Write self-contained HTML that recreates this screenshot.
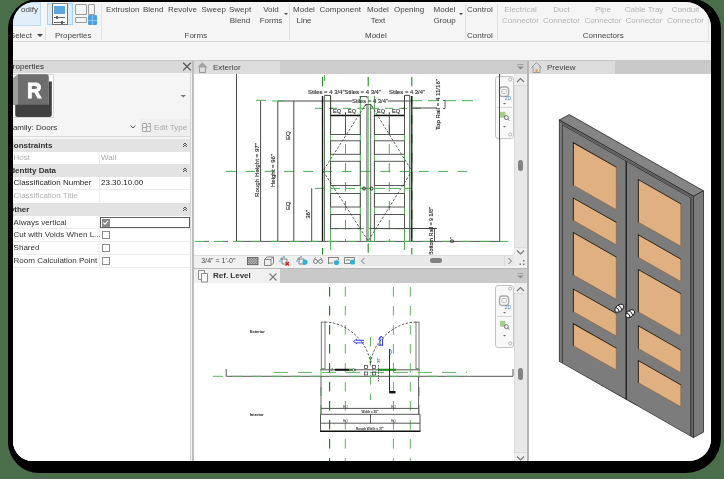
<!DOCTYPE html>
<html><head><meta charset="utf-8">
<style>
*{box-sizing:border-box}
html,body{margin:0;padding:0}
body{width:724px;height:479px;background:#4a6e4a;position:relative;overflow:hidden;font-family:"Liberation Sans",sans-serif;color:#333}
#shadow{position:absolute;left:8px;top:-1px;width:713px;height:473.5px;background:#000;border-radius:30px 30px 35px 31px}
#app{position:absolute;left:13px;top:2px;width:698px;height:458.5px;border-radius:22px 26px 22px 20px;overflow:hidden;background:#f5f5f5}
#in{position:absolute;left:-13px;top:-2px;width:724px;height:479px;will-change:transform}
.a{position:absolute}
svg{display:block}
.t{position:absolute;white-space:nowrap;font-size:8px;line-height:10px;color:#2e2e2e}
.c{text-align:center}
.g{color:#b4b4b4}
</style></head><body>
<div id="shadow"></div>
<div id="app"><div id="in">
<!-- ribbon -->
<div class="a" style="left:0;top:0;width:724px;height:60px;background:#f5f5f5"></div>
<div class="a" style="left:0;top:41px;width:724px;height:1px;background:#d9d9d9"></div>

<!-- modify -->
<div class="a" style="left:-6px;top:2px;width:47px;height:24px;background:#dfeef9;border:1px solid #bcdcf3"></div>
<div class="t" style="left:21px;top:4.6px;color:#454545">odify</div>
<div class="t" style="left:9.8px;top:30.8px;color:#454545">Select</div>
<div class="a" style="left:37px;top:34px;width:0;height:0;border-left:3px solid transparent;border-right:3px solid transparent;border-top:3px solid #444"></div>
<div class="a" style="left:45px;top:27px;width:1px;height:13px;background:#e0e0e0"></div>
<!-- properties icons -->
<div class="a" style="left:47px;top:3px;width:26px;height:22px;background:#dcedfa;border:1px solid #a3d1f3"></div>
<div class="a" style="left:51.5px;top:3px;width:16.5px;height:22px;background:#fafafa;border:1px solid #707070;border-top-color:#888"></div>
<div class="a" style="left:54px;top:5.5px;width:11px;height:8px;background:#5ba6e1"></div>
<div class="a" style="left:54px;top:17px;width:11px;height:1px;background:#666"></div>
<div class="a" style="left:56px;top:16px;width:2px;height:3px;background:#666"></div>
<div class="a" style="left:54px;top:22px;width:11px;height:1px;background:#666"></div>
<div class="a" style="left:61px;top:21px;width:2px;height:3px;background:#666"></div>
<div class="a" style="left:75px;top:3.5px;width:12px;height:11px;border:1px solid #9a9a9a;border-radius:1px"></div>
<div class="a" style="left:88px;top:3.5px;width:7px;height:11px;border:1px solid #9a9a9a;border-radius:1px"></div>
<div class="a" style="left:75px;top:16.5px;width:12px;height:6px;border:1px solid #9a9a9a;border-radius:1px"></div>
<div class="a" style="left:87.5px;top:15px;width:9px;height:9.5px;background:#4f9fe0;border-radius:1px"></div>
<div class="a" style="left:91.5px;top:15px;width:1px;height:9.5px;background:#8cc2ee"></div>
<div class="a" style="left:87.5px;top:19.5px;width:9px;height:1px;background:#8cc2ee"></div>
<div class="t" style="left:55px;top:30.8px;color:#454545">Properties</div>
<div class="a" style="left:101px;top:4px;width:1px;height:36px;background:#e2e2e2"></div>
<!-- forms -->
<div class="t" style="left:106px;top:4.6px;color:#454545">Extrusion</div>
<div class="t" style="left:143px;top:4.6px;color:#454545">Blend</div>
<div class="t" style="left:168px;top:4.6px;color:#454545">Revolve</div>
<div class="t" style="left:201.5px;top:4.6px;color:#454545">Sweep</div>
<div class="t c" style="left:226px;top:4.0px;width:28px;line-height:11.2px;color:#454545">Swept<br>Blend</div>
<div class="t c" style="left:257px;top:4.0px;width:28px;line-height:11.2px;color:#454545">Void<br>Forms</div>
<div class="a" style="left:283.5px;top:12.5px;width:0;height:0;border-left:2px solid transparent;border-right:2px solid transparent;border-top:2px solid #444"></div>
<div class="t" style="left:184.5px;top:30.8px;color:#454545">Forms</div>
<div class="a" style="left:288.5px;top:4px;width:1px;height:36px;background:#e2e2e2"></div>
<!-- model -->
<div class="t c" style="left:290px;top:4.0px;width:28px;line-height:11.2px;color:#454545">Model<br>Line</div>
<div class="t" style="left:319.5px;top:4.6px;color:#454545">Component</div>
<div class="t c" style="left:364px;top:4.0px;width:28px;line-height:11.2px;color:#454545">Model<br>Text</div>
<div class="t" style="left:394px;top:4.6px;color:#454545">Opening</div>
<div class="t c" style="left:430.5px;top:4.0px;width:28px;line-height:11.2px;color:#454545">Model<br>Group</div>
<div class="a" style="left:458.5px;top:12.5px;width:0;height:0;border-left:2px solid transparent;border-right:2px solid transparent;border-top:2px solid #444"></div>
<div class="t" style="left:365px;top:30.8px;color:#454545">Model</div>
<div class="a" style="left:464.5px;top:4px;width:1px;height:36px;background:#e2e2e2"></div>
<!-- control -->
<div class="t" style="left:467px;top:4.6px;color:#454545">Control</div>
<div class="t" style="left:467px;top:30.8px;color:#454545">Control</div>
<div class="a" style="left:497px;top:4px;width:1px;height:36px;background:#e2e2e2"></div>
<!-- connectors -->
<div class="t c g" style="left:500px;top:4.0px;width:41px;line-height:11.2px">Electrical<br>Connector</div>
<div class="t c g" style="left:541px;top:4.0px;width:41px;line-height:11.2px">Duct<br>Connector</div>
<div class="t c g" style="left:582.5px;top:4.0px;width:41px;line-height:11.2px">Pipe<br>Connector</div>
<div class="t c g" style="left:623.5px;top:4.0px;width:41px;line-height:11.2px">Cable Tray<br>Connector</div>
<div class="t c g" style="left:665px;top:4.0px;width:41px;line-height:11.2px">Conduit<br>Connector</div>
<div class="t" style="left:582.8px;top:30.8px;color:#454545">Connectors</div>
<div class="a" style="left:707.5px;top:4px;width:1px;height:36px;background:#e2e2e2"></div>

<!-- panel headers -->
<div class="a" style="left:0;top:60px;width:724px;height:1px;background:#c6c6c6"></div>
<div class="a" style="left:0;top:61px;width:192px;height:11.5px;background:#d9d9d9"></div>
<div class="t" style="left:7.5px;top:62.2px">Properties</div>

<!-- properties panel body -->
<div class="a" style="left:0;top:72.5px;width:191px;height:390px;background:#f5f5f5"></div>
<div class="a" style="left:190px;top:73px;width:1px;height:390px;background:#d4d4d4"></div>
<div class="a" style="left:192.2px;top:61px;width:2px;height:400px;background:#bcbcbc"></div>
<svg class="a" style="left:182px;top:62px" width="10" height="10"><path d="M1.2 0.8L8.8 8.4M8.8 0.8L1.2 8.4" stroke="#555" stroke-width="1.3"/></svg>
<!-- type selector -->
<div class="a" style="left:6px;top:74px;width:48px;height:44px;background:#fff;border:1px solid #d6d6d6"></div>
<svg class="a" style="left:0;top:0" width="200" height="140">
<path d="M13 78 L18 74.3 L18 105 L13 105Z" fill="#9c9c9c"/>
<path d="M18 74.3 H46.5 Q48.8 74.3 48.8 76.6 V105 H18Z" fill="#6e6e6e"/>
<path d="M48.8 81.5 H51.8 V105 H48.8Z" fill="#3d3d3d"/>
<path d="M15.2 104.8 H51.8 V114.5 Q51.8 117 49.3 117 H17.7 Q15.2 117 15.2 114.5 V104.8Z" fill="#404040"/>
<text x="0" y="0" transform="translate(34.2 97.8) scale(0.9 1)" font-family="Liberation Sans" font-weight="700" font-size="22.5" fill="#fff" stroke="#fff" stroke-width="0.9" text-anchor="middle">R</text>
<path d="M180.5 95 L186 95 L183.25 97.5Z" fill="#777"/>
<path d="M130.5 125.5 L133 128 L135.5 125.5" fill="none" stroke="#555" stroke-width="1"/>
</svg>
<div class="t" style="left:8px;top:122.8px">Family: Doors</div>
<div class="a" style="left:140px;top:119px;width:50px;height:17px;background:#efefef"></div>
<svg class="a" style="left:142px;top:123px" width="9" height="9"><path d="M0.5 0.5H4.5V8.5H0.5ZM4.5 3.5H8.5V8.5H4.5ZM0.5 4.5H4.5M6 0.5H8.5V3.5" fill="none" stroke="#aaa" stroke-width="1"/></svg>
<div class="t g" style="left:154px;top:122.5px;color:#a9a9a9">Edit Type</div>
<div class="a" style="left:0;top:136px;width:190px;height:1px;background:#dcdcdc"></div>
<!-- property grid -->
<div class="a" style="left:0;top:138.5px;width:190px;height:330px;background:#fff"></div>
<div class="a" style="left:0;top:139px;width:190px;height:12.5px;background:#e3e3e3"></div>
<div class="t" style="left:8px;top:140.5px;font-weight:bold;color:#333">Constraints</div>
<svg class="a" style="left:182px;top:142px" width="6" height="6"><path d="M1 3L3 1L5 3M1 5L3 3L5 5" fill="none" stroke="#444" stroke-width="0.9"/></svg>
<div class="a" style="left:0;top:163.5px;width:190px;height:1px;background:#ececec"></div>
<div class="a" style="left:99px;top:151.5px;width:1px;height:12.5px;background:#ececec"></div>
<div class="t" style="left:13.6px;top:153.1px;color:#b0b0b0">Host</div>
<div class="t" style="left:101px;top:153.1px;color:#a8a8a8">Wall</div>
<div class="a" style="left:0;top:164px;width:190px;height:12.5px;background:#e3e3e3"></div>
<div class="t" style="left:8px;top:165.5px;font-weight:bold;color:#333">Identity Data</div>
<svg class="a" style="left:182px;top:167px" width="6" height="6"><path d="M1 3L3 1L5 3M1 5L3 3L5 5" fill="none" stroke="#444" stroke-width="0.9"/></svg>
<div class="a" style="left:0;top:189.0px;width:190px;height:1px;background:#ececec"></div>
<div class="a" style="left:99px;top:176.5px;width:1px;height:13.0px;background:#ececec"></div>
<div class="t" style="left:13.6px;top:178.1px;color:#1e1e1e">Classification Number</div>
<div class="t" style="left:101px;top:178.1px;color:#222">23.30.10.00</div>
<div class="a" style="left:0;top:202.5px;width:190px;height:1px;background:#ececec"></div>
<div class="a" style="left:99px;top:189.5px;width:1px;height:13.5px;background:#ececec"></div>
<div class="t" style="left:13.6px;top:191.1px;color:#b0b0b0">Classification Title</div>
<div class="a" style="left:0;top:203px;width:190px;height:13px;background:#e3e3e3"></div>
<div class="t" style="left:8px;top:204.5px;font-weight:bold;color:#333">Other</div>
<svg class="a" style="left:182px;top:206px" width="6" height="6"><path d="M1 3L3 1L5 3M1 5L3 3L5 5" fill="none" stroke="#444" stroke-width="0.9"/></svg>
<div class="a" style="left:0;top:228.0px;width:190px;height:1px;background:#ececec"></div>
<div class="a" style="left:99px;top:216px;width:1px;height:12.5px;background:#ececec"></div>
<div class="t" style="left:13.6px;top:217.6px;color:#333">Always vertical</div>
<div class="a" style="left:99.5px;top:216.7px;width:90.5px;height:11.5px;border:1px solid #5e5e5e"></div>
<div class="a" style="left:101.5px;top:218.5px;width:8px;height:8px;background:#fff;border:1px solid #8a8a8a"></div>
<svg class="a" style="left:102px;top:219px" width="7" height="7"><path d="M0 0H7V7H0Z" fill="#888"/><path d="M1.3 3.5L3 5.2L6 1.8" fill="none" stroke="#fff" stroke-width="1.1"/></svg>
<div class="a" style="left:0;top:240.5px;width:190px;height:1px;background:#ececec"></div>
<div class="a" style="left:99px;top:228.5px;width:1px;height:12.5px;background:#ececec"></div>
<div class="t" style="left:13.6px;top:230.1px;color:#333">Cut with Voids When L...</div>
<div class="a" style="left:101.5px;top:231.0px;width:8px;height:8px;background:#fff;border:1px solid #8a8a8a"></div>
<div class="a" style="left:0;top:253.5px;width:190px;height:1px;background:#ececec"></div>
<div class="a" style="left:99px;top:241px;width:1px;height:13px;background:#ececec"></div>
<div class="t" style="left:13.6px;top:242.6px;color:#333">Shared</div>
<div class="a" style="left:101.5px;top:243.5px;width:8px;height:8px;background:#fff;border:1px solid #8a8a8a"></div>
<div class="a" style="left:0;top:266.5px;width:190px;height:1px;background:#ececec"></div>
<div class="a" style="left:99px;top:254px;width:1px;height:13px;background:#ececec"></div>
<div class="t" style="left:13.6px;top:255.6px;color:#333">Room Calculation Point</div>
<div class="a" style="left:101.5px;top:256.5px;width:8px;height:8px;background:#fff;border:1px solid #8a8a8a"></div>

<!-- view headers -->
<div class="a" style="left:194px;top:61px;width:334px;height:13px;background:#cdcdcd"></div>
<div class="a" style="left:194px;top:61px;width:86px;height:13px;background:#dcdcdc"></div>
<svg class="a" style="left:196px;top:61px" width="14" height="13"><path d="M1.3 6.5L6.3 1.2L11.7 6.5Z" fill="#a3a3a3"/><path d="M3.5 6.5V11.5H9.5V6.5" fill="none" stroke="#9a9a9a" stroke-width="1"/></svg>
<div class="t" style="left:213px;top:63px;color:#404040">Exterior</div>
<svg class="a" style="left:516px;top:63px" width="9" height="9"><path d="M1.5 1.5H7.5" stroke="#9a9a9a" stroke-width="0.9"/><path d="M1.3 3.5H7.7L4.5 6.6Z" fill="#8c8c8c"/></svg>
<div class="a" style="left:527px;top:61px;width:1.5px;height:400px;background:#b4b4b4"></div>
<div class="a" style="left:528.5px;top:61px;width:190px;height:13px;background:#c9c9c9"></div>
<div class="a" style="left:528.5px;top:61px;width:86.5px;height:13px;background:#dcdcdc"></div>
<svg class="a" style="left:530px;top:61px" width="14" height="13"><path d="M1.5 6.5L6.5 1.5L11.5 6.5M3 5V11.5H10V5" fill="none" stroke="#9a9a9a" stroke-width="1"/><path d="M5.5 8V11.5H7.5V8Z" fill="#e0a060"/></svg>
<div class="t" style="left:547px;top:63px;color:#404040">Preview</div>
<!-- exterior view body -->
<div class="a" style="left:194px;top:74px;width:333px;height:181px;background:#fff"></div>
<!--EXT--><svg class="a" style="left:0;top:0" width="724" height="479" font-family="Liberation Sans"><defs><clipPath id="cx"><rect x="194" y="74" width="320" height="180.5"/></clipPath></defs><g clip-path="url(#cx)"><line x1="203.5" y1="241.4" x2="236.5" y2="241.4" stroke="#666" stroke-width="1" stroke-dasharray="5.5 13.5"/>
<line x1="236.5" y1="241.4" x2="500" y2="241.4" stroke="#555" stroke-width="1"/>
<line x1="226" y1="171.4" x2="470" y2="171.4" stroke="#4caf50" stroke-width="1" stroke-dasharray="9.8 9.5"/>
<line x1="194.8" y1="241.4" x2="512" y2="241.4" stroke="#4caf50" stroke-width="1" stroke-dasharray="9.5 9.5"/>
<line x1="411" y1="100.7" x2="478" y2="100.7" stroke="#4caf50" stroke-width="1" stroke-dasharray="11 6"/>
<line x1="315" y1="108.3" x2="421" y2="108.3" stroke="#4caf50" stroke-width="1" stroke-dasharray="8 6"/>
<line x1="315" y1="188.4" x2="412" y2="188.4" stroke="#4caf50" stroke-width="1" stroke-dasharray="10 5"/>
<line x1="330" y1="228.6" x2="412" y2="228.6" stroke="#4caf50" stroke-width="1" stroke-dasharray="8 5"/>
<line x1="322.5" y1="77" x2="322.5" y2="255" stroke="#1e8c1e" stroke-width="1.1" stroke-dasharray="9.2 9.8"/>
<line x1="411.8" y1="77" x2="411.8" y2="255" stroke="#1e8c1e" stroke-width="1.1" stroke-dasharray="9.2 9.8"/>
<line x1="368.2" y1="77" x2="368.2" y2="96" stroke="#1e8c1e" stroke-width="1.1" stroke-dasharray="9.2 9.8"/>
<line x1="368.2" y1="96" x2="368.2" y2="241" stroke="#4caf50" stroke-width="0.9"/>
<line x1="368.2" y1="241" x2="368.2" y2="255" stroke="#1e8c1e" stroke-width="1.1" stroke-dasharray="0 2.6 9.2 9.8"/>
<line x1="324.4" y1="75" x2="324.4" y2="81" stroke="#4caf50" stroke-width="1"/>
<line x1="324.4" y1="96" x2="324.4" y2="241" stroke="#4caf50" stroke-width="1"/>
<line x1="330.6" y1="96" x2="330.6" y2="241" stroke="#4caf50" stroke-width="1"/>
<line x1="360.3" y1="96" x2="360.3" y2="241" stroke="#4caf50" stroke-width="1"/>
<line x1="374.4" y1="96" x2="374.4" y2="241" stroke="#4caf50" stroke-width="1"/>
<line x1="404.5" y1="96" x2="404.5" y2="241" stroke="#4caf50" stroke-width="1"/>
<line x1="409.8" y1="96" x2="409.8" y2="241" stroke="#4caf50" stroke-width="1"/>
<line x1="330.6" y1="241" x2="330.6" y2="255" stroke="#4caf50" stroke-width="1" stroke-dasharray="9 10"/>
<line x1="404.5" y1="241" x2="404.5" y2="255" stroke="#4caf50" stroke-width="1" stroke-dasharray="9 10"/>
<line x1="345.5" y1="125" x2="345.5" y2="241" stroke="#4caf50" stroke-width="1" stroke-dasharray="9.5 9.5"/>
<line x1="389.3" y1="125" x2="389.3" y2="241" stroke="#4caf50" stroke-width="1" stroke-dasharray="9.5 9.5"/>
<line x1="236.5" y1="74" x2="236.5" y2="241" stroke="#4a4a4a" stroke-width="1"/>
<line x1="260.6" y1="100" x2="260.6" y2="241" stroke="#4a4a4a" stroke-width="1"/>
<line x1="277.8" y1="101" x2="277.8" y2="241" stroke="#4a4a4a" stroke-width="1"/>
<line x1="293.8" y1="101" x2="293.8" y2="241" stroke="#4a4a4a" stroke-width="1"/>
<line x1="311.7" y1="188.3" x2="311.7" y2="241" stroke="#4a4a4a" stroke-width="1"/>
<line x1="499.7" y1="74" x2="499.7" y2="241.5" stroke="#4a4a4a" stroke-width="1"/>
<line x1="277.8" y1="101" x2="352" y2="101" stroke="#4a4a4a" stroke-width="1"/>
<line x1="388" y1="101" x2="412" y2="101" stroke="#4a4a4a" stroke-width="1"/>
<line x1="412" y1="108" x2="437" y2="108" stroke="#4a4a4a" stroke-width="1"/>
<line x1="436" y1="228.5" x2="370" y2="228.5" stroke="#4a4a4a" stroke-width="1"/>
<line x1="256" y1="100.3" x2="266" y2="100.3" stroke="#4caf50" stroke-width="1"/>
<line x1="272" y1="101" x2="284" y2="101" stroke="#4caf50" stroke-width="1"/>
<line x1="322.5" y1="96" x2="322.5" y2="241" stroke="#1a1a1a" stroke-width="1.3"/>
<line x1="324.4" y1="95.4" x2="324.4" y2="241" stroke="#666" stroke-width="0.8"/>
<line x1="411.8" y1="96" x2="411.8" y2="241" stroke="#1a1a1a" stroke-width="1.3"/>
<line x1="409.8" y1="95.4" x2="409.8" y2="241" stroke="#666" stroke-width="0.8"/>
<line x1="366.9" y1="104" x2="366.9" y2="241" stroke="#555" stroke-width="0.9"/>
<line x1="370.7" y1="104" x2="370.7" y2="241" stroke="#555" stroke-width="0.9"/>
<line x1="330.6" y1="95.4" x2="330.6" y2="115.4" stroke="#333" stroke-width="0.9"/>
<line x1="404.5" y1="95.4" x2="404.5" y2="115.4" stroke="#333" stroke-width="0.9"/>
<line x1="324.4" y1="95.4" x2="330.6" y2="95.4" stroke="#333" stroke-width="0.9"/>
<line x1="404.5" y1="95.4" x2="409.8" y2="95.4" stroke="#333" stroke-width="0.9"/>
<line x1="360.3" y1="96.5" x2="367" y2="96.5" stroke="#333" stroke-width="0.8"/>
<line x1="360.3" y1="96.5" x2="360.3" y2="98.5" stroke="#333" stroke-width="0.8"/>
<line x1="367" y1="96.5" x2="367" y2="98.5" stroke="#333" stroke-width="0.8"/>
<rect x="330.6" y="115.4" width="29.69999999999999" height="19.099999999999994" fill="none" stroke="#505050" stroke-width="0.95"/>
<rect x="330.6" y="140.8" width="29.69999999999999" height="13.5" fill="none" stroke="#505050" stroke-width="0.95"/>
<rect x="330.6" y="161.3" width="29.69999999999999" height="24.19999999999999" fill="none" stroke="#505050" stroke-width="0.95"/>
<rect x="330.6" y="193.5" width="29.69999999999999" height="13.5" fill="none" stroke="#505050" stroke-width="0.95"/>
<rect x="330.6" y="214.5" width="29.69999999999999" height="14.099999999999994" fill="none" stroke="#505050" stroke-width="0.95"/>
<line x1="330.6" y1="115.4" x2="360.3" y2="115.4" stroke="#111" stroke-width="1.5"/>
<rect x="374.4" y="115.4" width="30.100000000000023" height="19.099999999999994" fill="none" stroke="#505050" stroke-width="0.95"/>
<rect x="374.4" y="140.8" width="30.100000000000023" height="13.5" fill="none" stroke="#505050" stroke-width="0.95"/>
<rect x="374.4" y="161.3" width="30.100000000000023" height="24.19999999999999" fill="none" stroke="#505050" stroke-width="0.95"/>
<rect x="374.4" y="193.5" width="30.100000000000023" height="13.5" fill="none" stroke="#505050" stroke-width="0.95"/>
<rect x="374.4" y="214.5" width="30.100000000000023" height="14.099999999999994" fill="none" stroke="#505050" stroke-width="0.95"/>
<line x1="374.4" y1="115.4" x2="404.5" y2="115.4" stroke="#111" stroke-width="1.5"/>
<line x1="345.5" y1="112" x2="345.5" y2="134.5" stroke="#444" stroke-width="0.9"/>
<line x1="389.3" y1="112" x2="389.3" y2="134.5" stroke="#444" stroke-width="0.9"/>
<line x1="330.6" y1="108.3" x2="333" y2="108.3" stroke="#333" stroke-width="0.8"/>
<line x1="404.5" y1="108.3" x2="402" y2="108.3" stroke="#333" stroke-width="0.8"/>
<path d="M366 104 L323 171 L368.2 241 L411.8 171 L370.5 104" fill="none" stroke="#333" stroke-width="0.75" stroke-dasharray="2.6 1.6"/>
<path d="M363.5 107.5 L366 104.5 H370.5 L373 107.5" fill="none" stroke="#333" stroke-width="0.7"/>
<circle cx="364" cy="188.5" r="1.5" fill="none" stroke="#222" stroke-width="1"/>
<circle cx="371.5" cy="188.5" r="1.5" fill="none" stroke="#222" stroke-width="1"/>
<path d="M443 100.5 H445 V108.5 H443 M434.5 228.5 V241 M434.5 228.5 H437" fill="none" stroke="#333" stroke-width="0.8"/>
<text x="258.6" y="170" font-size="6.2" fill="#262626" stroke="#262626" stroke-width="0.12" text-anchor="middle" transform="rotate(-90 258.6 170)" textLength="54" lengthAdjust="spacingAndGlyphs">Rough Height = 97"</text>
<text x="275" y="170.5" font-size="6.2" fill="#262626" stroke="#262626" stroke-width="0.12" text-anchor="middle" transform="rotate(-90 275 170.5)" textLength="33" lengthAdjust="spacingAndGlyphs">Height = 96"</text>
<text x="290.5" y="135.6" font-size="6" fill="#262626" stroke="#262626" stroke-width="0.12" text-anchor="middle" transform="rotate(-90 290.5 135.6)" textLength="9" lengthAdjust="spacingAndGlyphs">EQ</text>
<text x="290.5" y="205.8" font-size="6" fill="#262626" stroke="#262626" stroke-width="0.12" text-anchor="middle" transform="rotate(-90 290.5 205.8)" textLength="8.5" lengthAdjust="spacingAndGlyphs">EQ</text>
<text x="310" y="214.3" font-size="6" fill="#262626" stroke="#262626" stroke-width="0.12" text-anchor="middle" transform="rotate(-90 310 214.3)" textLength="9" lengthAdjust="spacingAndGlyphs">36"</text>
<text x="344.5" y="93.5" font-size="6" fill="#262626" stroke="#262626" stroke-width="0.12" text-anchor="middle" textLength="73" lengthAdjust="spacingAndGlyphs">Stiles = 4 3/4"Stiles = 4 3/4"</text>
<text x="407" y="93.5" font-size="6" fill="#262626" stroke="#262626" stroke-width="0.12" text-anchor="middle" textLength="36" lengthAdjust="spacingAndGlyphs">Stiles = 4 3/4"</text>
<text x="370" y="103.4" font-size="6" fill="#262626" stroke="#262626" stroke-width="0.12" text-anchor="middle" textLength="36" lengthAdjust="spacingAndGlyphs">Stiles = 4 3/4"</text>
<text x="337" y="113" font-size="5.5" fill="#262626" stroke="#262626" stroke-width="0.12" text-anchor="middle" textLength="8" lengthAdjust="spacingAndGlyphs">EQ</text>
<text x="352" y="113" font-size="5.5" fill="#262626" stroke="#262626" stroke-width="0.12" text-anchor="middle" textLength="8" lengthAdjust="spacingAndGlyphs">EQ</text>
<text x="381" y="113" font-size="5.5" fill="#262626" stroke="#262626" stroke-width="0.12" text-anchor="middle" textLength="8" lengthAdjust="spacingAndGlyphs">EQ</text>
<text x="396" y="113" font-size="5.5" fill="#262626" stroke="#262626" stroke-width="0.12" text-anchor="middle" textLength="8" lengthAdjust="spacingAndGlyphs">EQ</text>
<text x="440" y="104.5" font-size="6.2" fill="#262626" stroke="#262626" stroke-width="0.12" text-anchor="middle" transform="rotate(-90 440 104.5)" textLength="51" lengthAdjust="spacingAndGlyphs">Top Rail = 4 11/16"</text>
<text x="433" y="231" font-size="6.2" fill="#262626" stroke="#262626" stroke-width="0.12" text-anchor="middle" transform="rotate(-90 433 231)" textLength="48" lengthAdjust="spacingAndGlyphs">Bottom Rail = 9 1/8"</text>
<text x="454" y="240" font-size="6" fill="#262626" stroke="#262626" stroke-width="0.12" text-anchor="middle" transform="rotate(-90 454 240)" textLength="6" lengthAdjust="spacingAndGlyphs">0"</text></g></svg><!--/EXT-->
<!-- view toolbar -->
<div class="a" style="left:194px;top:254.5px;width:333px;height:1px;background:#dedede"></div>
<div class="a" style="left:194px;top:255.5px;width:333px;height:12.5px;background:#f0f0f0"></div>
<div class="t" style="left:201.3px;top:256px;font-size:7px;color:#444">3/4" = 1'-0"</div>
<!-- ref level header -->
<div class="a" style="left:194px;top:268px;width:333px;height:1px;background:#b8b8b8"></div>
<div class="a" style="left:194px;top:269px;width:333px;height:13.5px;background:#c9c9c9"></div>
<div class="a" style="left:194px;top:269px;width:86px;height:13.5px;background:#f0f0f0"></div>
<svg class="a" style="left:196px;top:269px" width="14" height="14"><path d="M2.5 1.5H8.5V10.5H2.5Z" fill="#fafafa" stroke="#8c8c8c" stroke-width="1"/><path d="M5.5 4.5H11.5V13H5.5Z" fill="#fafafa" stroke="#8c8c8c" stroke-width="1"/></svg>
<div class="t" style="left:213px;top:271px;font-weight:bold;color:#333">Ref. Level</div>
<svg class="a" style="left:267.5px;top:271.5px" width="10" height="10"><path d="M1.5 1.5L8.5 8.5M8.5 1.5L1.5 8.5" stroke="#7a7a7a" stroke-width="1.1"/></svg>
<svg class="a" style="left:516px;top:272px" width="9" height="9"><path d="M1.5 1.5H7.5" stroke="#9a9a9a" stroke-width="0.9"/><path d="M1.3 3.5H7.7L4.5 6.6Z" fill="#8c8c8c"/></svg>
<div class="a" style="left:194px;top:282.5px;width:333px;height:180px;background:#fff"></div>
<!--REF--><svg class="a" style="left:0;top:0" width="724" height="479" font-family="Liberation Sans"><defs><clipPath id="cr"><rect x="194" y="282.5" width="320" height="180"/></clipPath></defs><g clip-path="url(#cr)"><line x1="226.2" y1="376.3" x2="513" y2="376.3" stroke="#555" stroke-width="1"/>
<line x1="226.2" y1="369" x2="226.2" y2="376.3" stroke="#555" stroke-width="1"/>
<line x1="513" y1="369" x2="513" y2="376.3" stroke="#555" stroke-width="1"/>
<line x1="213" y1="376.3" x2="467" y2="376.3" stroke="#5cb85c" stroke-width="1" stroke-dasharray="10 9.5"/>
<line x1="274" y1="372.4" x2="467" y2="372.4" stroke="#5cb85c" stroke-width="1" stroke-dasharray="14 10"/>
<line x1="320" y1="369.8" x2="420" y2="369.8" stroke="#555" stroke-width="1"/>
<line x1="329.6" y1="287" x2="329.6" y2="461" stroke="#168a16" stroke-width="1.2" stroke-dasharray="9.6 9.4"/>
<line x1="345.3" y1="287" x2="345.3" y2="461" stroke="#5cb85c" stroke-width="1" stroke-dasharray="9.6 9.4"/>
<line x1="393.4" y1="287" x2="393.4" y2="461" stroke="#5cb85c" stroke-width="1" stroke-dasharray="9.6 9.4"/>
<line x1="410.3" y1="287" x2="410.3" y2="461" stroke="#5cb85c" stroke-width="1" stroke-dasharray="9.6 9.4"/>
<line x1="370.5" y1="337" x2="370.5" y2="400" stroke="#5cb85c" stroke-width="1" stroke-dasharray="9.6 9.4"/>
<line x1="321" y1="369" x2="321" y2="414" stroke="#5cb85c" stroke-width="1" stroke-dasharray="9 9"/>
<line x1="419" y1="369" x2="419" y2="414" stroke="#5cb85c" stroke-width="1" stroke-dasharray="9 9"/>
<rect x="321.3" y="322.1" width="3.7" height="46.7" fill="#fff" stroke="#6a6a6a" stroke-width="0.9"/>
<rect x="416" y="322.1" width="3" height="46.7" fill="#fff" stroke="#6a6a6a" stroke-width="0.9"/>
<path d="M325 322.1 C345 322, 368 340, 370.5 364" fill="none" stroke="#333" stroke-width="0.75" stroke-dasharray="2.5 1.5"/>
<path d="M416 322.1 C396 322, 373 340, 370.5 364" fill="none" stroke="#333" stroke-width="0.75" stroke-dasharray="2.5 1.5"/>
<line x1="334.8" y1="369.8" x2="349.2" y2="369.8" stroke="#111" stroke-width="2"/>
<line x1="349.2" y1="369.8" x2="356" y2="369.8" stroke="#1a8a1a" stroke-width="2"/>
<line x1="378" y1="369.8" x2="396" y2="369.8" stroke="#1a8a1a" stroke-width="2"/>
<circle cx="353.5" cy="370" r="1.2" fill="#fff" stroke="#333" stroke-width="0.6"/>
<text x="332" y="371" font-size="4" fill="#333" text-anchor="middle" >2</text>
<rect x="364.5" y="365.5" width="3" height="3" fill="none" stroke="#333" stroke-width="0.7"/>
<rect x="364.5" y="372.0" width="3" height="3" fill="none" stroke="#333" stroke-width="0.7"/>
<rect x="372.5" y="365.5" width="3" height="3" fill="none" stroke="#333" stroke-width="0.7"/>
<rect x="372.5" y="372.0" width="3" height="3" fill="none" stroke="#333" stroke-width="0.7"/>
<line x1="378.5" y1="365" x2="378.5" y2="382" stroke="#444" stroke-width="0.8" stroke-dasharray="1.5 1"/>
<text x="380" y="360" font-size="4" fill="#333" text-anchor="middle"  transform="rotate(-90 380 360)">36"</text>
<line x1="389.5" y1="349" x2="389.5" y2="392" stroke="#333" stroke-width="1"/>
<path d="M389.8 349 Q393 352 389.8 355" fill="none" stroke="#4a7fd8" stroke-width="0.9"/>
<rect x="389.2" y="391" width="6.3" height="2.4" fill="#111"/>
<path d="M356 340.3 H364 M356 342.8 H364 M353.5 341.5 L357 339 M353.5 341.5 L357 344" fill="none" stroke="#2030e0" stroke-width="0.9"/>
<path d="M380 346 V337 M382.5 346 V339 M378.5 340 L381 336 L383.5 339 M378 345 H383" fill="none" stroke="#2030e0" stroke-width="0.9"/>
<text x="257.4" y="333" font-size="3.8" fill="#111" text-anchor="middle" font-weight="bold" textLength="15" lengthAdjust="spacingAndGlyphs">Exterior</text>
<text x="256.7" y="416.2" font-size="3.8" fill="#111" text-anchor="middle" font-weight="bold" textLength="14" lengthAdjust="spacingAndGlyphs">Interior</text>
<line x1="321" y1="408.4" x2="418.4" y2="408.4" stroke="#444" stroke-width="0.9"/>
<line x1="320.5" y1="414.3" x2="420" y2="414.3" stroke="#444" stroke-width="0.9"/>
<line x1="320.5" y1="423.2" x2="420" y2="423.2" stroke="#444" stroke-width="0.9"/>
<line x1="320" y1="431.2" x2="420.5" y2="431.2" stroke="#111" stroke-width="1.4"/>
<line x1="321" y1="376.3" x2="321" y2="414.3" stroke="#555" stroke-width="0.9"/>
<line x1="418.6" y1="376.3" x2="418.6" y2="414.3" stroke="#555" stroke-width="0.9"/>
<line x1="320.5" y1="414.3" x2="320.5" y2="431.2" stroke="#444" stroke-width="0.9"/>
<line x1="420" y1="414.3" x2="420" y2="431.2" stroke="#444" stroke-width="0.9"/>
<line x1="370.5" y1="414.3" x2="370.5" y2="423.2" stroke="#444" stroke-width="0.9"/>
<text x="370" y="413.3" font-size="4" fill="#333" text-anchor="middle" font-weight="bold" textLength="17" lengthAdjust="spacingAndGlyphs">Width = 36"</text>
<text x="370" y="429.5" font-size="4" fill="#333" text-anchor="middle" font-weight="bold" textLength="28" lengthAdjust="spacingAndGlyphs">Rough Width = 37"</text>
<text x="345.5" y="407.5" font-size="3.5" fill="#333" text-anchor="middle"  textLength="5" lengthAdjust="spacingAndGlyphs">EQ</text>
<text x="393.5" y="407.5" font-size="3.5" fill="#333" text-anchor="middle"  textLength="5" lengthAdjust="spacingAndGlyphs">EQ</text>
<text x="345.5" y="422" font-size="3.5" fill="#333" text-anchor="middle"  textLength="5" lengthAdjust="spacingAndGlyphs">EQ</text>
<text x="393.5" y="422" font-size="3.5" fill="#333" text-anchor="middle"  textLength="5" lengthAdjust="spacingAndGlyphs">EQ</text></g></svg><!--/REF-->
<!--CHROME--><svg class="a" style="left:494px;top:74.7px" width="21" height="65">
<rect x="1.5" y="1.5" width="18" height="62" rx="2.5" fill="#f8f8f8" stroke="#c4c4c4" stroke-width="1"/>
<circle cx="16.2" cy="4.6" r="1.6" fill="none" stroke="#b0b0b0" stroke-width="0.9"/>
<rect x="5.5" y="12" width="9.2" height="9.5" rx="3" fill="none" stroke="#a8a8a8" stroke-width="1.3"/>
<rect x="7.8" y="14.5" width="4.8" height="4" rx="1.2" fill="none" stroke="#b4b4b4" stroke-width="0.9"/>
<text x="14" y="24.6" font-size="5" fill="#4a86c8" font-family="Liberation Sans" text-anchor="middle">2D</text>
<path d="M9 28H12L10.5 29.5Z" fill="#666"/>
<line x1="3" y1="32.4" x2="18" y2="32.4" stroke="#d4d4d4" stroke-width="1"/>
<rect x="6" y="36.8" width="5.4" height="5.8" fill="#a3cf86"/>
<circle cx="12.3" cy="42.6" r="2" fill="none" stroke="#666" stroke-width="0.9"/>
<line x1="13.8" y1="44.1" x2="15.3" y2="45.6" stroke="#666" stroke-width="1"/>
<path d="M9 51H12L10.5 52.5Z" fill="#666"/>
<circle cx="16.2" cy="59.5" r="1.6" fill="none" stroke="#b0b0b0" stroke-width="0.9"/>
</svg><div class="a" style="left:514px;top:74px;width:13px;height:181.5px;background:#e8e8e8;border-left:1px solid #dedede"></div><div class="a" style="left:514px;top:74px;width:13px;height:11.5px;background:#eeeeee;border-bottom:1px solid #dadada"></div><svg class="a" style="left:515px;top:77px" width="11" height="6"><path d="M2 5L5.5 1.5L9 5" fill="none" stroke="#777" stroke-width="1.1"/></svg><div class="a" style="left:518px;top:159.6px;width:5px;height:11.5px;background:#838383;border-radius:2.5px"></div><div class="a" style="left:514px;top:246.5px;width:13px;height:9px;background:#eeeeee;border-top:1px solid #dadada"></div><svg class="a" style="left:515px;top:249.0px" width="11" height="6"><path d="M2 1.5L5.5 5L9 1.5" fill="none" stroke="#777" stroke-width="1.1"/></svg><div class="a" style="left:358.5px;top:255.5px;width:168.5px;height:11px;background:#e8e8e8"></div>
<svg class="a" style="left:359px;top:256px" width="8" height="10"><path d="M5.5 2L2.5 5L5.5 8" fill="none" stroke="#777" stroke-width="1"/></svg>
<div class="a" style="left:430.3px;top:258.2px;width:11.7px;height:4.6px;background:#808080;border-radius:2.3px"></div>
<div class="a" style="left:503.6px;top:255.5px;width:1px;height:11px;background:#d8d8d8"></div>
<svg class="a" style="left:506px;top:256px" width="8" height="10"><path d="M2.5 2L5.5 5L2.5 8" fill="none" stroke="#777" stroke-width="1"/></svg>
<div class="a" style="left:514px;top:255.5px;width:13px;height:11px;background:#eeeeee"></div>
<svg class="a" style="left:514px;top:255.5px" width="13" height="11"><rect x="9" y="4" width="1.5" height="1.5" fill="#777"/><rect x="9" y="7.5" width="1.5" height="1.5" fill="#777"/><rect x="5.5" y="7.5" width="1.5" height="1.5" fill="#777"/></svg>
<div class="a" style="left:194px;top:266.3px;width:333px;height:2px;background:#f3f3f3"></div>
<svg class="a" style="left:244px;top:255px" width="115" height="12">
<defs><pattern id="chk" width="1.6" height="1.6" patternUnits="userSpaceOnUse"><rect width="1.6" height="1.6" fill="#d0d0d0"/><rect width="0.8" height="0.8" fill="#6a6a6a"/><rect x="0.8" y="0.8" width="0.8" height="0.8" fill="#6a6a6a"/></pattern></defs>
<rect x="3.5" y="2.5" width="10.5" height="7.2" fill="url(#chk)" stroke="#555" stroke-width="0.8"/>
<path d="M20.5 4.5L23 2H29.5V8L27 10.5H20.5Z M20.5 4.5H27V10.5 M27 4.5L29.5 2" fill="none" stroke="#777" stroke-width="0.9"/>
<path d="M38 2V9H45 M36 4H43V10" fill="none" stroke="#777" stroke-width="0.9"/>
<path d="M35 6H37" stroke="#3aa0d8" stroke-width="1.2"/><path d="M40 1V3" stroke="#3aa0d8" stroke-width="1.2"/>
<path d="M41.5 7L45 10.5M45 7L41.5 10.5" stroke="#e02020" stroke-width="1.3"/>
<path d="M55 2V9H62 M53 4H60V10" fill="none" stroke="#777" stroke-width="0.9"/>
<path d="M52 6H54" stroke="#3aa0d8" stroke-width="1.2"/><path d="M57 1V3" stroke="#3aa0d8" stroke-width="1.2"/>
<circle cx="61" cy="7" r="2.6" fill="#35b0d0"/>
<path d="M69.5 6.5A2 2 0 1 0 73.5 6.5A2 2 0 1 0 69.5 6.5M74.5 6.5A2 2 0 1 0 78.5 6.5A2 2 0 1 0 74.5 6.5M73.5 6H74.5M70 4.5L71.5 2.5M78 4.5L76.5 2.5" fill="none" stroke="#666" stroke-width="0.8"/>
<path d="M84.5 2V9 M84.5 2.5H94.5V5 M84.5 8H89" fill="none" stroke="#777" stroke-width="0.9"/>
<circle cx="92.5" cy="7.5" r="2.6" fill="#35b0d0"/>
<path d="M100.5 2.5H110.5V6 M100.5 2.5V8.5H107 M102 5H106" fill="none" stroke="#777" stroke-width="0.9"/>
<circle cx="108.5" cy="7" r="2.6" fill="#35b0d0"/>
</svg>
<svg class="a" style="left:494px;top:283.5px" width="21" height="65">
<rect x="1.5" y="1.5" width="18" height="62" rx="2.5" fill="#f8f8f8" stroke="#c4c4c4" stroke-width="1"/>
<circle cx="16.2" cy="4.6" r="1.6" fill="none" stroke="#b0b0b0" stroke-width="0.9"/>
<rect x="5.5" y="12" width="9.2" height="9.5" rx="3" fill="none" stroke="#a8a8a8" stroke-width="1.3"/>
<rect x="7.8" y="14.5" width="4.8" height="4" rx="1.2" fill="none" stroke="#b4b4b4" stroke-width="0.9"/>
<text x="14" y="24.6" font-size="5" fill="#4a86c8" font-family="Liberation Sans" text-anchor="middle">2D</text>
<path d="M9 28H12L10.5 29.5Z" fill="#666"/>
<line x1="3" y1="32.4" x2="18" y2="32.4" stroke="#d4d4d4" stroke-width="1"/>
<rect x="6" y="36.8" width="5.4" height="5.8" fill="#a3cf86"/>
<circle cx="12.3" cy="42.6" r="2" fill="none" stroke="#666" stroke-width="0.9"/>
<line x1="13.8" y1="44.1" x2="15.3" y2="45.6" stroke="#666" stroke-width="1"/>
<path d="M9 51H12L10.5 52.5Z" fill="#666"/>
<circle cx="16.2" cy="59.5" r="1.6" fill="none" stroke="#b0b0b0" stroke-width="0.9"/>
</svg><div class="a" style="left:514px;top:282.5px;width:13px;height:178.5px;background:#e8e8e8;border-left:1px solid #dedede"></div><div class="a" style="left:514px;top:282.5px;width:13px;height:11.5px;background:#eeeeee;border-bottom:1px solid #dadada"></div><svg class="a" style="left:515px;top:285.5px" width="11" height="6"><path d="M2 5L5.5 1.5L9 5" fill="none" stroke="#777" stroke-width="1.1"/></svg><div class="a" style="left:518px;top:368px;width:5px;height:11.5px;background:#838383;border-radius:2.5px"></div><div class="a" style="left:514px;top:452px;width:13px;height:9px;background:#eeeeee;border-top:1px solid #dadada"></div><svg class="a" style="left:515px;top:454.5px" width="11" height="6"><path d="M2 1.5L5.5 5L9 1.5" fill="none" stroke="#777" stroke-width="1.1"/></svg><div class="a" style="left:499.2px;top:74px;width:1px;height:66px;background:#4a4a4a"></div><!--/CHROME-->
<!-- preview body -->
<div class="a" style="left:528.5px;top:74px;width:190px;height:390px;background:#fff"></div>
<!--PREV--><svg class="a" style="left:0;top:0" width="724" height="479"><defs><clipPath id="cp"><rect x="528.5" y="74" width="182" height="390"/></clipPath></defs><g clip-path="url(#cp)"><polygon points="559.30,120.00 693.50,196.23 703.50,190.83 569.30,114.60" fill="#858585" stroke="#2a2a2a" stroke-width="0.8" stroke-linejoin="round"/>
<polygon points="693.50,196.23 693.50,437.53 703.50,432.13 703.50,190.83" fill="#7a7a7a" stroke="#2a2a2a" stroke-width="0.8" stroke-linejoin="round"/>
<g transform="matrix(1 0.568 0 1 559.3 120)">
<rect x="0" y="0" width="134.2" height="241.3" fill="#7c7c7c" stroke="#2a2a2a" stroke-width="0.8"/>
<path d="M3 241.3 V3.2 H131.6 V241.3" fill="none" stroke="#303030" stroke-width="0.8"/>
<path d="M0.5 1.6 H133.7" fill="none" stroke="#3a3a3a" stroke-width="0.5"/>
<line x1="131.6" y1="3" x2="131.6" y2="241.3" stroke="#333" stroke-width="0.7"/>
<line x1="133.6" y1="3" x2="133.6" y2="241.3" stroke="#444" stroke-width="0.5"/>
<line x1="66.9" y1="3.2" x2="66.9" y2="241.3" stroke="#111" stroke-width="1.2"/>
<rect x="13.6" y="14.3" width="43.699999999999996" height="43.3" fill="#e0b080"/>
<path d="M14.0 57.6 V14.700000000000001 H57.3" fill="none" stroke="#1a1a1a" stroke-width="1"/>
<path d="M13.6 57.300000000000004 H57.0 V14.3" fill="none" stroke="#5a4a3a" stroke-width="0.5"/>
<rect x="13.6" y="69.6" width="43.699999999999996" height="23.200000000000003" fill="#e0b080"/>
<path d="M14.0 92.8 V70.0 H57.3" fill="none" stroke="#1a1a1a" stroke-width="1"/>
<path d="M13.6 92.5 H57.0 V69.6" fill="none" stroke="#5a4a3a" stroke-width="0.5"/>
<rect x="13.6" y="104.2" width="43.699999999999996" height="43.10000000000001" fill="#e0b080"/>
<path d="M14.0 147.3 V104.60000000000001 H57.3" fill="none" stroke="#1a1a1a" stroke-width="1"/>
<path d="M13.6 147.0 H57.0 V104.2" fill="none" stroke="#5a4a3a" stroke-width="0.5"/>
<rect x="13.6" y="160.6" width="43.699999999999996" height="23.400000000000006" fill="#e0b080"/>
<path d="M14.0 184 V161.0 H57.3" fill="none" stroke="#1a1a1a" stroke-width="1"/>
<path d="M13.6 183.7 H57.0 V160.6" fill="none" stroke="#5a4a3a" stroke-width="0.5"/>
<rect x="13.6" y="195.3" width="43.699999999999996" height="22.799999999999983" fill="#e0b080"/>
<path d="M14.0 218.1 V195.70000000000002 H57.3" fill="none" stroke="#1a1a1a" stroke-width="1"/>
<path d="M13.6 217.79999999999998 H57.0 V195.3" fill="none" stroke="#5a4a3a" stroke-width="0.5"/>
<rect x="78.6" y="14.3" width="43.2" height="43.3" fill="#e0b080"/>
<path d="M79.0 57.6 V14.700000000000001 H121.8" fill="none" stroke="#1a1a1a" stroke-width="1"/>
<path d="M78.6 57.300000000000004 H121.5 V14.3" fill="none" stroke="#5a4a3a" stroke-width="0.5"/>
<rect x="78.6" y="69.6" width="43.2" height="23.200000000000003" fill="#e0b080"/>
<path d="M79.0 92.8 V70.0 H121.8" fill="none" stroke="#1a1a1a" stroke-width="1"/>
<path d="M78.6 92.5 H121.5 V69.6" fill="none" stroke="#5a4a3a" stroke-width="0.5"/>
<rect x="78.6" y="104.2" width="43.2" height="43.10000000000001" fill="#e0b080"/>
<path d="M79.0 147.3 V104.60000000000001 H121.8" fill="none" stroke="#1a1a1a" stroke-width="1"/>
<path d="M78.6 147.0 H121.5 V104.2" fill="none" stroke="#5a4a3a" stroke-width="0.5"/>
<rect x="78.6" y="160.6" width="43.2" height="23.400000000000006" fill="#e0b080"/>
<path d="M79.0 184 V161.0 H121.8" fill="none" stroke="#1a1a1a" stroke-width="1"/>
<path d="M78.6 183.7 H121.5 V160.6" fill="none" stroke="#5a4a3a" stroke-width="0.5"/>
<rect x="78.6" y="195.3" width="43.2" height="22.799999999999983" fill="#e0b080"/>
<path d="M79.0 218.1 V195.70000000000002 H121.8" fill="none" stroke="#1a1a1a" stroke-width="1"/>
<path d="M78.6 217.79999999999998 H121.5 V195.3" fill="none" stroke="#5a4a3a" stroke-width="0.5"/>
</g>
<g transform="translate(619.3 308.2) rotate(-38)"><ellipse cx="0" cy="0" rx="5" ry="3.2" fill="#f4f4f4" stroke="#111" stroke-width="0.9"/><path d="M-2.2 -2.8 Q-0.6 0 -2.2 2.8 M0.9 -3 Q2.4 0 0.9 3" fill="none" stroke="#111" stroke-width="0.9"/></g>
<g transform="translate(630.2 313.7) rotate(-38)"><ellipse cx="0" cy="0" rx="5" ry="3.2" fill="#f4f4f4" stroke="#111" stroke-width="0.9"/><path d="M-2.2 -2.8 Q-0.6 0 -2.2 2.8 M0.9 -3 Q2.4 0 0.9 3" fill="none" stroke="#111" stroke-width="0.9"/></g></g></svg><!--/PREV-->
</div></div>
</body></html>
